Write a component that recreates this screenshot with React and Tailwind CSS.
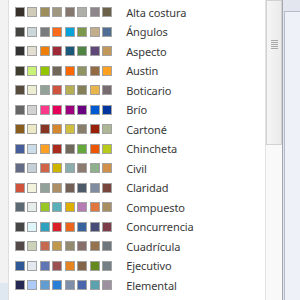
import React from 'react';

const themes = [
  { name: 'Alta costura', colors: ['#37302A', '#D0CCB9', '#9E8E5C', '#A09781', '#85776D', '#AEAFA9', '#8D878B', '#6B6149'] },
  { name: 'Ángulos', colors: ['#434342', '#CDD7D9', '#797B7E', '#F96A1B', '#08A1D9', '#7C984A', '#C2AD8D', '#506E94'] },
  { name: 'Aspecto', colors: ['#323232', '#E3DED1', '#F07F09', '#9F2936', '#1B587C', '#4E8542', '#604878', '#C19859'] },
  { name: 'Austin', colors: ['#3E3D2D', '#CAF278', '#94C600', '#71685A', '#FF6700', '#909465', '#956B43', '#FEA022'] },
  { name: 'Boticario', colors: ['#564B3C', '#ECEDD1', '#93A299', '#CF543F', '#B5AE53', '#848058', '#E8B54D', '#786C71'] },
  { name: 'Brío', colors: ['#666666', '#D2D2D2', '#FF388C', '#E40059', '#9C007F', '#68007F', '#005BD3', '#00349E'] },
  { name: 'Cartoné', colors: ['#895D1D', '#ECE9C6', '#873624', '#D6862D', '#D0BE40', '#877F6C', '#972109', '#AEB795'] },
  { name: 'Chincheta', colors: ['#465E9C', '#CCDDEA', '#FDA023', '#AA2B1E', '#71685C', '#64A73B', '#EB5605', '#B9CA1A'] },
  { name: 'Civil', colors: ['#646B86', '#C5D1D7', '#D16349', '#CCB400', '#8CADAE', '#8C7B70', '#8FB08C', '#D19049'] },
  { name: 'Claridad', colors: ['#D2533C', '#F3F2DC', '#93A299', '#AD8F67', '#726056', '#4C5A6A', '#808DA0', '#79463D'] },
  { name: 'Compuesto', colors: ['#5B6973', '#E7ECED', '#98C723', '#59B0B9', '#DEAE00', '#B77BB4', '#E0773C', '#A98D63'] },
  { name: 'Concurrencia', colors: ['#464646', '#DEF5FA', '#2DA2BF', '#DA1F28', '#EB641B', '#39639D', '#474B78', '#7D3C4A'] },
  { name: 'Cuadrícula', colors: ['#534949', '#CCD1B9', '#C66951', '#BF974D', '#928B70', '#87706B', '#94734E', '#6F777D'] },
  { name: 'Ejecutivo', colors: ['#2F5897', '#E4E9EF', '#6076B4', '#9C5252', '#E68422', '#846648', '#63891F', '#758085'] },
  { name: 'Elemental', colors: ['#242852', '#ACCBF9', '#629DD1', '#297FD5', '#7F8FA9', '#4A66AC', '#5AA2AE', '#9D90A0'] },
  { name: 'Equidad', colors: ['#696464', '#E9E5DC', '#D34817', '#9B2D1F', '#A28E6A', '#956251', '#918485', '#855D5D'] },
];

function ThemeRow({ theme }) {
  return (
    <div className="flex items-center h-[19.5px] shrink-0">
      <div className="flex gap-[2.5px]">
        {theme.colors.map((c, i) => (
          <span key={i} className="block w-[10px] h-[10px] border border-[#a3a3a3]" style={{ backgroundColor: c }} />
        ))}
      </div>
      <span className="ml-[14px] text-[11px] tracking-[-0.1px] leading-none text-[#3a3a3a] whitespace-nowrap">{theme.name}</span>
    </div>
  );
}

export default function App() {
  return (
    <div className="w-[300px] h-[300px] flex overflow-hidden bg-white" style={{ fontFamily: '"Noto Sans", "Open Sans", sans-serif' }}>
      {/* left gutter */}
      <div className="w-[9px] flex flex-col border-r border-[#dedede]">
        <div className="flex-1 bg-[#f2f2f2]" />
        <div className="h-[17px] bg-[#dfe7f1]" />
      </div>

      {/* theme list */}
      <div className="w-[256px] flex flex-col pt-[2.25px] pl-[5.7px] overflow-hidden">
        {themes.map(t => <ThemeRow key={t.name} theme={t} />)}
      </div>

      {/* scrollbar */}
      <div className="w-[17px] flex flex-col bg-[#f7f7f7] border-l border-[#e2e2e2]">
        <div className="h-[145px] flex flex-col items-center border border-[#d2d2d2] bg-gradient-to-r from-[#f5f5f5] to-[#ebebeb]">
          <div className="mt-[39px] flex flex-col gap-[1px]">
            {[0, 1, 2, 3, 4].map(i => <span key={i} className="block w-[7px] h-[1px] bg-[#a8a8a8]" />)}
          </div>
        </div>
        <div className="flex-1 bg-[#f9f9f9]" />
      </div>

      {/* window edge */}
      <div className="w-[1px] bg-[#a4a7b0]" />
      <div className="flex-1 flex flex-col bg-[#e3e6ee] pl-[1px]">
        <div className="mt-[11px] flex-1 border-l border-t border-[#b5bbc8] bg-[#eef1f7]" />
      </div>
    </div>
  );
}
